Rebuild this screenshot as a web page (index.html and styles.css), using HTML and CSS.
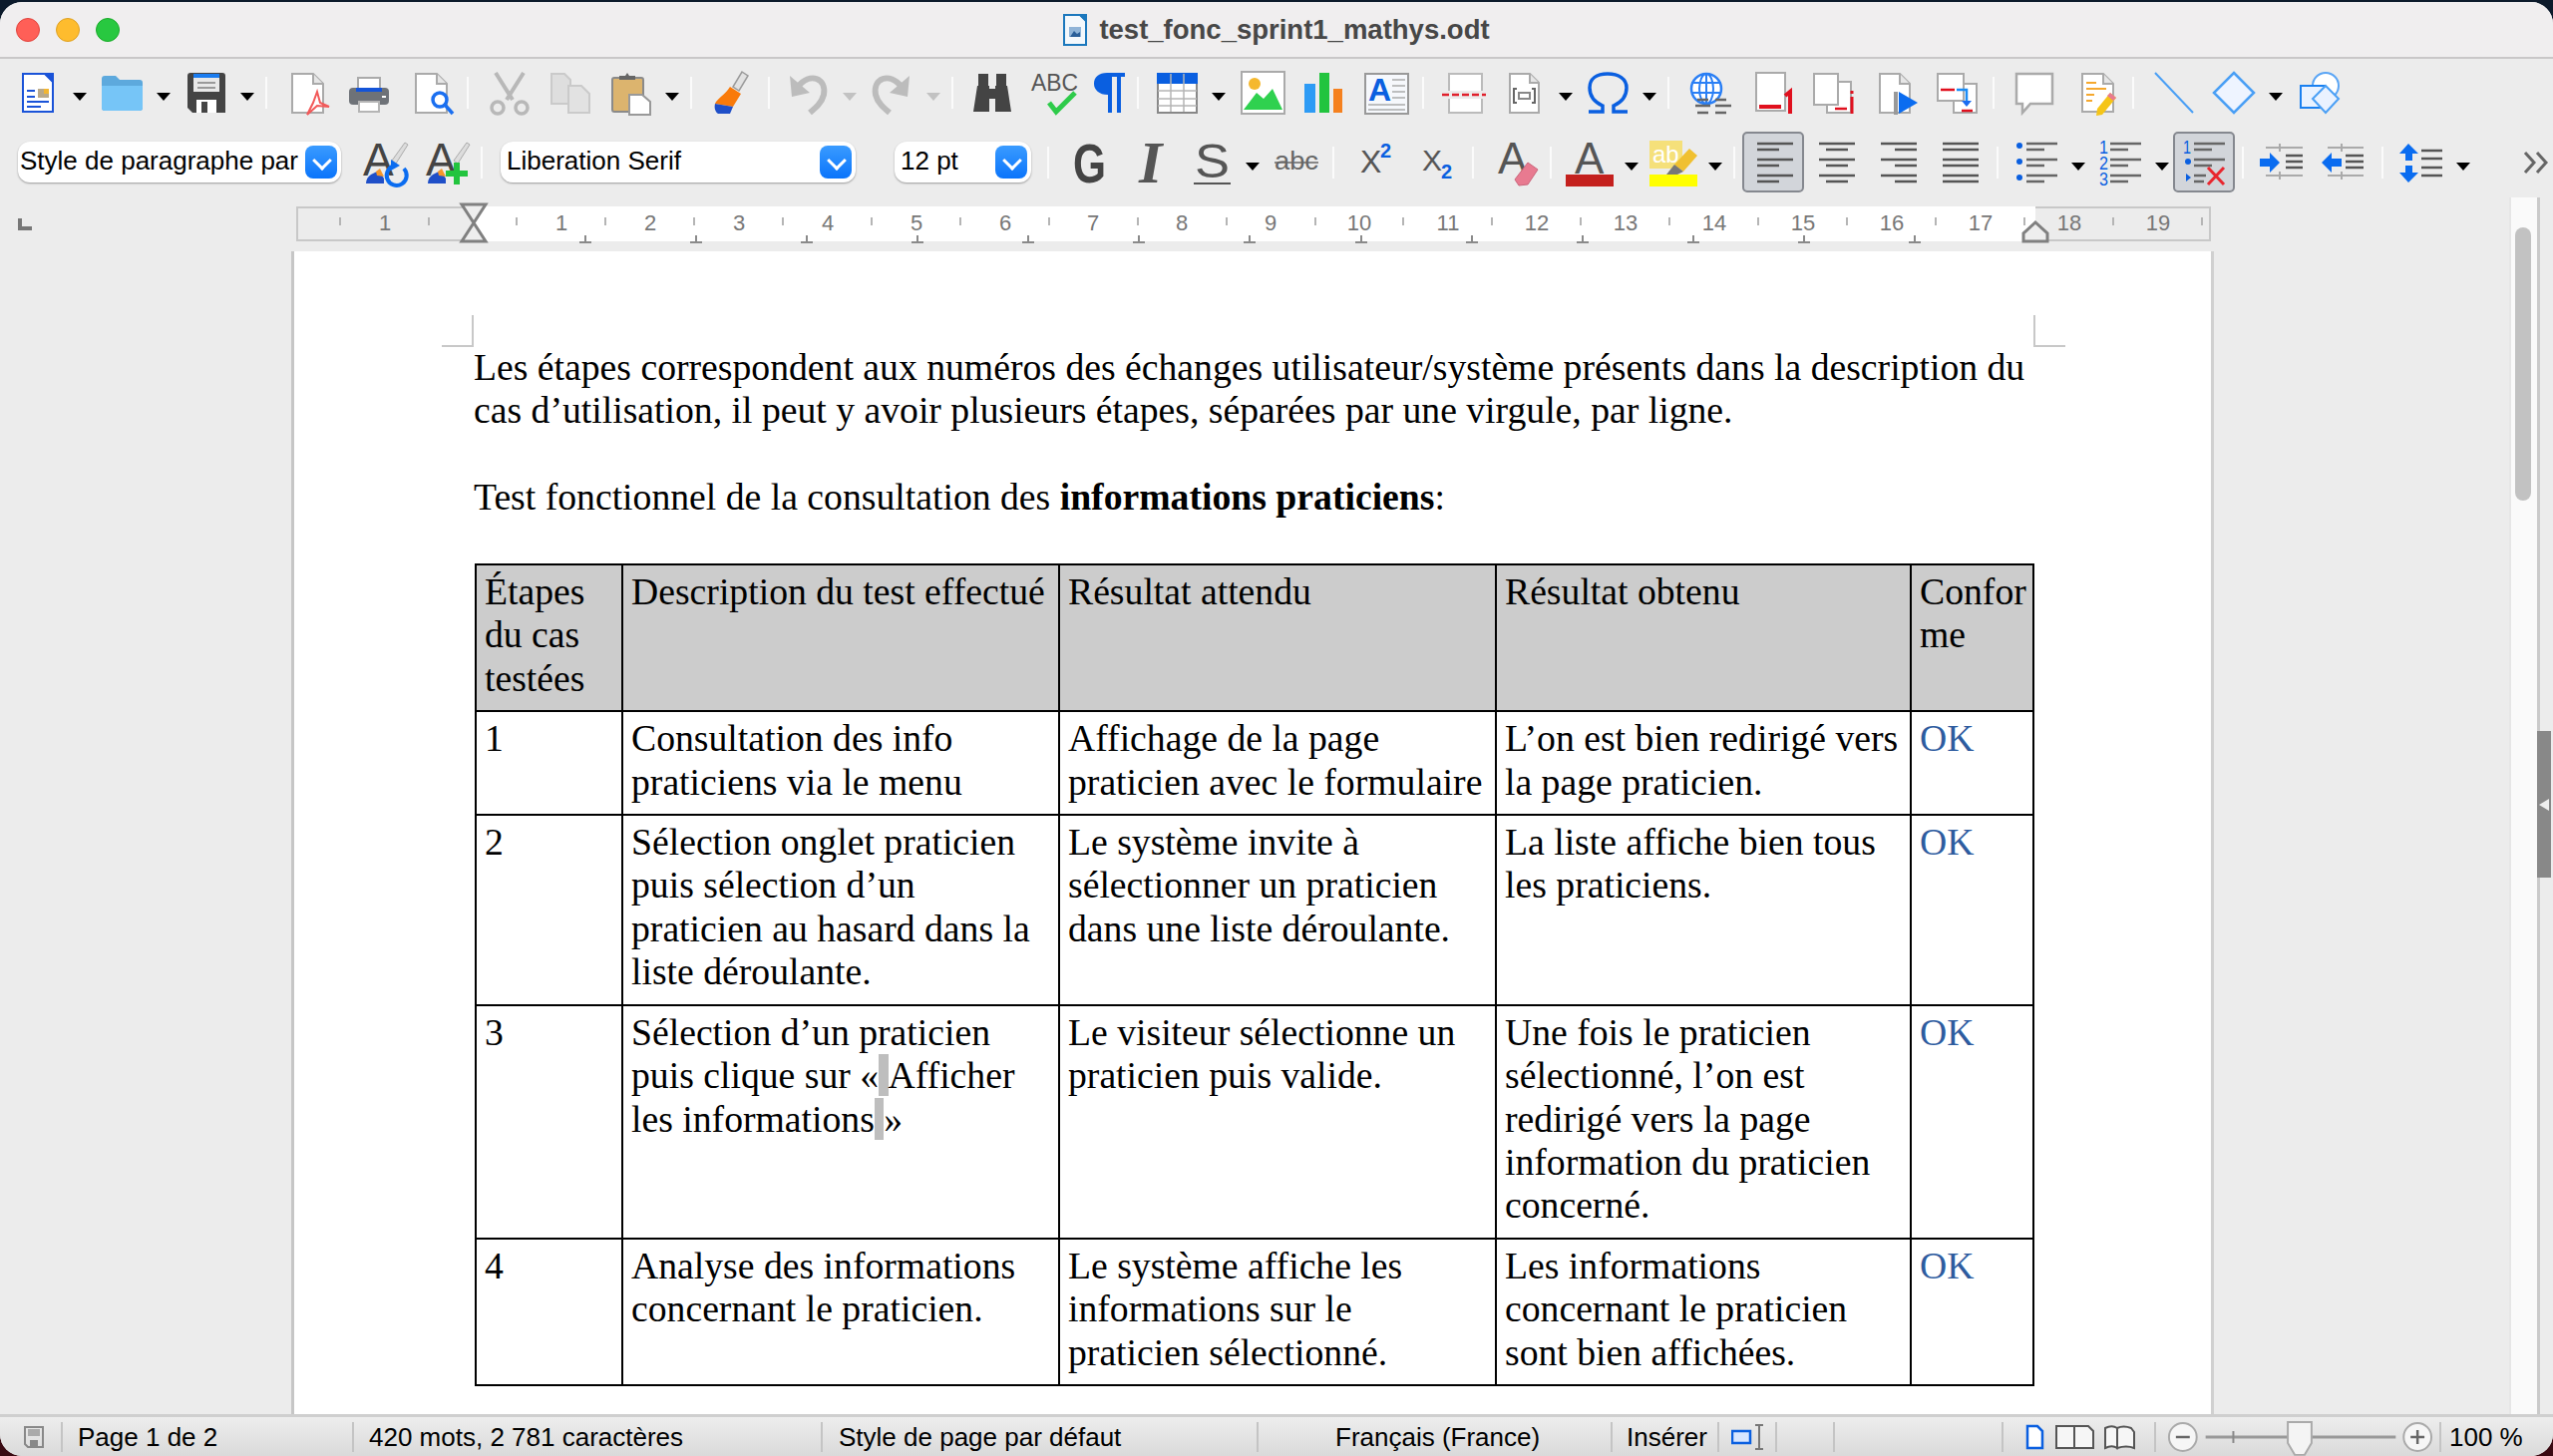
FILE: index.html
```html
<!DOCTYPE html>
<html lang="fr">
<head>
<meta charset="utf-8">
<title>test_fonc_sprint1_mathys.odt</title>
<link rel="stylesheet" href="styles.css">
</head>
<body>
<div class="window">
  <header class="titlebar">
    <div class="lights"><i class="light red"></i><i class="light yellow"></i><i class="light green"></i></div>
    <div class="title">
      <svg class="title-icon" viewBox="0 0 24 32"><path d="M1 1h16l6 6v24H1z" fill="#f4f8fc" stroke="#1c78bd" stroke-width="2"/><path d="M15 0h9v9z" fill="#1c78bd"/><rect x="6" y="13" width="12" height="10" fill="#8fb4d8"/><path d="M7 23l4-6 3 3 3-2v5z" fill="#2a5f99"/></svg>
      <span>test_fonc_sprint1_mathys.odt</span>
    </div>
  </header>

  <div class="toolbars">
    <div class="toolbar">
      <svg class="ic" viewBox="0 0 62 48"><path d="M16 5h22l8 8v30H16z" fill="#fff" stroke="#1a53d8" stroke-width="2"/><path d="M36 4h11v11z" fill="#1a53d8"/><path d="M20 22h8M20 28h8M20 33h22M20 38h14" stroke="#1a53d8" stroke-width="2"/><rect x="31" y="20" width="11" height="9" fill="#b9a98a"/><rect x="37" y="20" width="5" height="5" fill="#f2b632"/></svg>
      <span class="drop"></span>
      <svg class="ic" viewBox="0 0 62 48"><path d="M11 10a3 3 0 0 1 3-3h11l4 4h20a3 3 0 0 1 3 3v25a3 3 0 0 1-3 3H14a3 3 0 0 1-3-3z" fill="#5da9dd"/><path d="M11 17h41v22a3 3 0 0 1-3 3H14a3 3 0 0 1-3-3z" fill="#76c5f7"/></svg>
      <span class="drop"></span>
      <svg class="ic" viewBox="0 0 62 48"><path d="M13 7a3 3 0 0 1 3-3h32a3 3 0 0 1 3 3v37H18l-5-5z" fill="#444"/><rect x="19" y="5" width="26" height="18" fill="#e8e8e8"/><rect x="19" y="5" width="26" height="4" fill="#1a7cf0"/><path d="M23 14h18M23 19h18" stroke="#999" stroke-width="2"/><rect x="22" y="31" width="20" height="13" fill="#fff"/><rect x="27" y="33" width="6" height="11" fill="#444"/></svg>
      <span class="drop"></span>
      <span class="sep"></span>
      <svg class="ic" viewBox="0 0 62 48"><path d="M18 5h21l10 10v29H18z" fill="#fff" stroke="#aaa" stroke-width="2"/><path d="M39 5v10h10" fill="#e6e6e6" stroke="#aaa" stroke-width="2"/><path d="M43 23l3 11 9 4-12-1-10 9 6-12z" fill="none" stroke="#f25a5a" stroke-width="2"/></svg>
      <svg class="ic" viewBox="0 0 62 48"><rect x="22" y="9" width="22" height="14" fill="#fff" stroke="#aaa" stroke-width="2"/><rect x="13" y="19" width="40" height="17" rx="4" fill="#6e7278"/><rect x="20" y="19" width="26" height="4" fill="#1454d8"/><rect x="23" y="33" width="20" height="10" fill="#fff" stroke="#b5b5b5" stroke-width="2"/><rect x="46" y="27" width="4" height="2" fill="#fff"/></svg>
      <svg class="ic" viewBox="0 0 62 48"><path d="M18 5h21l10 10v29H18z" fill="#fff" stroke="#aaa" stroke-width="2"/><path d="M39 5v10h10" fill="#e6e6e6" stroke="#aaa" stroke-width="2"/><circle cx="42" cy="31" r="7" fill="#fff" stroke="#1a6ff0" stroke-width="3.5"/><path d="M47 36l8 9" stroke="#1a6ff0" stroke-width="3.5"/></svg>
      <span class="sep"></span>
      <svg class="ic" viewBox="0 0 62 48"><circle cx="22" cy="39" r="6" fill="none" stroke="#b8b8b8" stroke-width="3.5"/><circle cx="46" cy="39" r="6" fill="none" stroke="#b8b8b8" stroke-width="3.5"/><path d="M20 4l17 27M48 4L31 31" stroke="#b8b8b8" stroke-width="4"/></svg>
      <svg class="ic" viewBox="0 0 62 48"><path d="M14 5h13l6 6v24H14z" fill="#dedede" stroke="#cacaca" stroke-width="2"/><path d="M31 17h13l8 8v19H31z" fill="#e2e2e2" stroke="#cacaca" stroke-width="2"/></svg>
      <svg class="ic" viewBox="0 0 62 48"><rect x="13" y="9" width="31" height="34" rx="2" fill="#dcb46e" stroke="#8a8a8a" stroke-width="2"/><path d="M20 11V7h6l2-3 2 3h6v4z" fill="#666"/><path d="M30 26h13l8 7v13H30z" fill="#fff" stroke="#999" stroke-width="2"/></svg>
      <span class="drop"></span>
      <span class="sep"></span>
      <svg class="ic" viewBox="0 0 62 48"><path d="M43 3l6 4-9 15-6-4z" fill="#e2e2e2" stroke="#999" stroke-width="1.5"/><path d="M31 18l11 7-8 13-18-3c2-5 11-10 15-17z" fill="#f97a0a"/><path d="M16 35l18 3-3 7H19c-3-2-4-6-3-10z" fill="#1f4fc8"/></svg>
      <span class="sep"></span>
      <svg class="ic" viewBox="0 0 62 48"><path d="M21 18C33 3 50 9 47 26c-2 8-8 13-14 18" fill="none" stroke="#bcbcbc" stroke-width="6"/><path d="M13 7l2 21 18-4z" fill="#bcbcbc"/></svg>
      <span class="drop off"></span>
      <svg class="ic" viewBox="0 0 62 48"><path d="M41 18C29 3 12 9 15 26c2 8 8 13 14 18" fill="none" stroke="#bcbcbc" stroke-width="6"/><path d="M49 7l-2 21-18-4z" fill="#bcbcbc"/></svg>
      <span class="drop off"></span>
      <span class="sep"></span>
      <svg class="ic" viewBox="0 0 62 48"><path d="M18 5h10v12H18zM36 5h10v12H36z" fill="#444"/><path d="M13 43l4-26h12v26zM35 17h12l4 26H35zM29 20h6v10h-6z" fill="#444"/></svg>
      <svg class="ic" viewBox="0 0 62 48"><text class="ic-txt" x="9" y="22" font-size="23" fill="#555" textLength="47" lengthAdjust="spacingAndGlyphs">ABC</text><path d="M27 34l7 9 19-19" fill="none" stroke="#2ecb4a" stroke-width="5"/></svg>
      <svg class="ic-n" viewBox="0 0 46 48"><path d="M23 4h18v4h-4v36h-4V8h-5v36h-4V26c-9 0-14-5-14-11 0-7 5-11 13-11z" fill="#0a5fe0"/></svg>
      <span class="sep"></span>
      <svg class="ic" viewBox="0 0 62 48"><rect x="12" y="5" width="39" height="39" fill="#fff" stroke="#888" stroke-width="2"/><rect x="11" y="4" width="41" height="11" fill="#0a5fe0"/><path d="M25 5v38M38 5v38M12 22h39M12 30h39M12 37h39" stroke="#b5b5b5" stroke-width="1.5"/></svg>
      <span class="drop"></span>
      <svg class="ic" viewBox="0 0 62 48"><rect x="12" y="3" width="43" height="42" fill="#fff" stroke="#aaa" stroke-width="2"/><circle cx="25" cy="15" r="6" fill="#f5b82e"/><path d="M14 41l13-17 7 6 9-10 10 21z" fill="#2fd14f"/></svg>
      <svg class="ic" viewBox="0 0 62 48"><rect x="13" y="15" width="11" height="29" fill="#2d9bf5"/><rect x="28" y="4" width="10" height="40" fill="#22c43e"/><rect x="42" y="20" width="9" height="24" fill="#f5811f"/></svg>
      <svg class="ic" viewBox="0 0 62 48"><rect x="12" y="5" width="43" height="40" fill="#f6f8fc" stroke="#999" stroke-width="2"/><text class="ic-txt" x="15" y="32" font-size="32" font-weight="700" fill="#0a5fe0">A</text><path d="M39 11h13M39 17h13M39 23h13M39 29h13M15 36h37M15 41h37" stroke="#aaa" stroke-width="1.5"/></svg>
      <span class="sep"></span>
      <svg class="ic" viewBox="0 0 62 48"><path d="M18 22V5h33v17" fill="#fff" stroke="#bbb" stroke-width="2"/><path d="M18 30v14h33V30" fill="#fff" stroke="#bbb" stroke-width="2"/><path d="M11 26h44" stroke="#e0202c" stroke-width="2.5" stroke-dasharray="7 3"/></svg>
      <svg class="ic" viewBox="0 0 62 48"><path d="M17 5h20l9 9v30H17z" fill="#fff" stroke="#aaa" stroke-width="2"/><path d="M37 5v9h9" fill="#e6e6e6" stroke="#aaa" stroke-width="2"/><path d="M24 20h-3v14h3M39 20h3v14h-3" fill="none" stroke="#666" stroke-width="2"/><rect x="26" y="24" width="11" height="6" fill="none" stroke="#888" stroke-width="2"/></svg>
      <span class="drop"></span>
      <svg class="ic" viewBox="0 0 62 48"><path d="M12 43h14v-6C17 33 13 26 13 19 13 10 20 5 31 5s19 5 19 14c0 7-4 14-13 18v6h14" fill="none" stroke="#0a5fe0" stroke-width="3.5"/></svg>
      <span class="drop"></span>
      <span class="sep"></span>
      <svg class="ic" viewBox="0 0 62 48"><circle cx="30" cy="20" r="15" fill="#fff" stroke="#2a7ff5" stroke-width="2.5"/><ellipse cx="30" cy="20" rx="7" ry="15" fill="none" stroke="#2a7ff5" stroke-width="2"/><path d="M15 14h30M15 24h30M30 5v30" stroke="#2a7ff5" stroke-width="2"/><path d="M21 31h11M39 31h11M19 37h15M39 37h16M21 44h11M39 44h11" stroke="#666" stroke-width="2.5"/></svg>
      <svg class="ic" viewBox="0 0 62 48"><rect x="18" y="4" width="29" height="38" fill="#fff" stroke="#aaa" stroke-width="2"/><rect x="21" y="36" width="22" height="4" fill="#e0101e"/><path d="M47 27l5-4v22" fill="none" stroke="#e0101e" stroke-width="4"/></svg>
      <svg class="ic" viewBox="0 0 62 48"><rect x="27" y="13" width="24" height="31" fill="#fff" stroke="#aaa" stroke-width="2"/><rect x="14" y="5" width="24" height="31" fill="#fff" stroke="#aaa" stroke-width="2"/><path d="M35 40h12" stroke="#e0101e" stroke-width="2.5"/><path d="M52 22v3M52 28v17" stroke="#e0101e" stroke-width="3"/></svg>
      <svg class="ic" viewBox="0 0 62 48"><path d="M18 5h20l10 10v29H18z" fill="#fff" stroke="#aaa" stroke-width="2"/><path d="M38 5v10h10" fill="#e6e6e6" stroke="#aaa" stroke-width="2"/><path d="M34 23v23" stroke="#999" stroke-width="4"/><path d="M37 23l19 11-19 11z" fill="#0a6cf0"/></svg>
      <svg class="ic" viewBox="0 0 62 48"><rect x="30" y="15" width="23" height="29" fill="#fff" stroke="#aaa" stroke-width="2"/><rect x="14" y="5" width="26" height="27" fill="#fff" stroke="#aaa" stroke-width="2"/><path d="M17 21h14" stroke="#e0101e" stroke-width="2.5"/><path d="M33 21h10v12" fill="none" stroke="#1a8cf5" stroke-width="2.5"/><path d="M38 32h10l-5 6z" fill="#1a6cf0"/><path d="M38 42h11" stroke="#e0101e" stroke-width="2.5"/></svg>
      <span class="sep"></span>
      <svg class="ic" viewBox="0 0 62 48"><path d="M15 5h36v30H29l-8 9V35h-6z" fill="#fff" stroke="#aaa" stroke-width="2.5"/></svg>
      <svg class="ic" viewBox="0 0 62 48"><path d="M19 5h21l10 10v28H19z" fill="#fff" stroke="#aaa" stroke-width="2"/><path d="M40 5v10h10" fill="#e6e6e6" stroke="#aaa" stroke-width="2"/><path d="M23 14h10M23 20h20M23 26h8M23 32h6" stroke="#f5a82e" stroke-width="2"/><path d="M47 24l6 5-14 17-6 1 1-7z" fill="#f5c518"/><path d="M47 24l6 5-3 3-6-5z" fill="#e87a90"/></svg>
      <span class="sep"></span>
      <svg class="ic" viewBox="0 0 62 48"><path d="M14 4l38 40" stroke="#4a9ff5" stroke-width="2"/></svg>
      <svg class="ic" viewBox="0 0 62 48"><path d="M31 4l20 20-20 20-20-20z" fill="#eef4ff" stroke="#4a9ff5" stroke-width="2.5"/></svg>
      <span class="drop"></span>
      <svg class="ic" viewBox="0 0 62 48"><circle cx="39" cy="17" r="13" fill="#fff" stroke="#5aa5f5" stroke-width="2"/><rect x="14" y="17" width="24" height="22" fill="#eaf2ff" stroke="#1a80f0" stroke-width="2"/><path d="M39 17l13 13-13 14-13-14z" fill="#eaf2ff" stroke="#4a9ff5" stroke-width="2"/></svg>
    </div>

    <div class="toolbar toolbar-fmt">
      <div class="combo combo-style"><span class="combo-text">Style de paragraphe par</span><span class="combo-btn"></span></div>
      <svg class="ic ic-first" viewBox="0 0 62 48"><text class="ic-txt" x="8" y="37" font-size="46" fill="#444">A</text><path d="M50 4l3 2-12 19-4-3z" fill="#ddd" stroke="#aaa"/><path d="M16 36l8-4 5 8v5H11c0-4 2-7 5-9z" fill="#1f4fc8"/><path d="M21 33l4-3 4 8-7-1z" fill="#f5962a"/><path d="M49 30a10 10 0 1 1-9-3" fill="none" stroke="#0a6cf0" stroke-width="4"/><path d="M36 21l9 6-9 5z" fill="#0a6cf0"/></svg>
      <svg class="ic ic-second" viewBox="0 0 62 48"><text class="ic-txt" x="9" y="37" font-size="46" fill="#444">A</text><path d="M50 4l3 2-12 19-4-3z" fill="#ddd" stroke="#aaa"/><path d="M16 36l8-4 5 8v5H11c0-4 2-7 5-9z" fill="#1f4fc8"/><path d="M21 33l4-3 4 8-7-1z" fill="#f5962a"/><path d="M40 24v22M29 35h22" stroke="#22c43e" stroke-width="6"/></svg>
      <span class="sep"></span>
      <div class="combo combo-font"><span class="combo-text">Liberation Serif</span><span class="combo-btn"></span></div>
      <div class="combo combo-size"><span class="combo-text">12 pt</span><span class="combo-btn"></span></div>
      <span class="sep"></span>
      <svg class="ic" viewBox="0 0 62 48"><text class="ic-txt" x="17" y="44" font-size="55" font-weight="700" fill="#444" textLength="33" lengthAdjust="spacingAndGlyphs">G</text></svg>
      <svg class="ic" viewBox="0 0 62 48"><text class="ic-serif" x="21" y="44" font-size="60" font-style="italic" font-weight="700" fill="#555">I</text></svg>
      <svg class="ic" viewBox="0 0 62 48"><text class="ic-txt" x="15" y="39" font-size="48" fill="#555" textLength="35" lengthAdjust="spacingAndGlyphs">S</text><rect x="14" y="44" width="37" height="2" fill="#555"/></svg>
      <span class="drop"></span>
      <svg class="ic" viewBox="0 0 62 48"><text class="ic-txt" x="11" y="31" font-size="25" fill="#666" textLength="44" lengthAdjust="spacingAndGlyphs">abc</text><path d="M11 24h44" stroke="#666" stroke-width="1.5"/></svg>
      <span class="sep"></span>
      <svg class="ic" viewBox="0 0 62 48"><text class="ic-txt" x="19" y="34" font-size="32" fill="#555">X</text><text class="ic-txt" x="39" y="19" font-size="20" font-weight="700" fill="#0a5fe0">2</text></svg>
      <svg class="ic" viewBox="0 0 62 48"><text class="ic-txt" x="19" y="32" font-size="30" fill="#555">X</text><text class="ic-txt" x="38" y="40" font-size="20" font-weight="700" fill="#0a5fe0">2</text></svg>
      <span class="sep"></span>
      <svg class="ic" viewBox="0 0 62 48"><text class="ic-txt" x="17" y="35" font-size="44" fill="#555">A</text><path d="M47 24l10 7-10 15-9 1-4-6z" fill="#e87a90" stroke="#c9647a"/></svg>
      <span class="sep"></span>
      <svg class="ic" viewBox="0 0 62 48"><text class="ic-txt" x="16" y="35" font-size="44" fill="#555">A</text><rect x="7" y="36" width="48" height="12" fill="#c4201d"/></svg>
      <span class="drop"></span>
      <svg class="ic" viewBox="0 0 62 48"><rect x="7" y="2" width="33" height="28" fill="#f5e07a"/><text class="ic-txt" x="10" y="24" font-size="24" fill="#fff">ab</text><path d="M47 10l8 7-14 16-9-7z" fill="#f0c030"/><path d="M32 26l9 7-6 3H24z" fill="#777"/><rect x="7" y="36" width="48" height="12" fill="#ffff00"/></svg>
      <span class="drop"></span>
      <span class="sep"></span>
      <span class="toggle"><svg class="ic-t" viewBox="0 0 58 48"><path d="M13 5h36M13 21h36M13 37h36" stroke="#555" stroke-width="2.5"/><path d="M13 11h22M13 27h22M13 43h22" stroke="#555" stroke-width="2.5"/></svg></span>
      <svg class="ic" viewBox="0 0 62 48"><path d="M15 5h36M15 21h36M15 37h36M22 11h22M22 27h22M22 43h22" stroke="#555" stroke-width="2.5"/></svg>
      <svg class="ic" viewBox="0 0 62 48"><path d="M15 5h36M15 21h36M15 37h36M29 11h22M29 27h22M29 43h22" stroke="#555" stroke-width="2.5"/></svg>
      <svg class="ic" viewBox="0 0 62 48"><path d="M15 5h36M15 11h36M15 21h36M15 27h36M15 37h36M15 43h36" stroke="#555" stroke-width="2.5"/></svg>
      <span class="sep"></span>
      <svg class="ic" viewBox="0 0 62 48"><path d="M21 5h31M21 21h31M21 37h31M21 11h18M21 27h18M21 43h18" stroke="#666" stroke-width="2.5"/><circle cx="14" cy="7" r="3" fill="#0a5fe0"/><circle cx="14" cy="23" r="3" fill="#0a5fe0"/><circle cx="14" cy="39" r="3" fill="#0a5fe0"/></svg>
      <span class="drop"></span>
      <svg class="ic" viewBox="0 0 62 48"><text class="ic-txt" x="10" y="15" font-size="19" fill="#0a5fe0" textLength="9" lengthAdjust="spacingAndGlyphs">1</text><text class="ic-txt" x="10" y="31" font-size="19" fill="#0a5fe0" textLength="9" lengthAdjust="spacingAndGlyphs">2</text><text class="ic-txt" x="10" y="47" font-size="19" fill="#0a5fe0" textLength="9" lengthAdjust="spacingAndGlyphs">3</text><path d="M21 5h31M21 21h31M21 37h31M21 11h18M21 27h18M21 43h18" stroke="#666" stroke-width="2.5"/></svg>
      <span class="drop"></span>
      <span class="toggle"><svg class="ic-t" viewBox="0 0 58 48"><text class="ic-txt" x="8" y="15" font-size="19" fill="#0a5fe0" textLength="8" lengthAdjust="spacingAndGlyphs">1</text><circle cx="13" cy="23" r="3" fill="#0a5fe0"/><path d="M11 35l5 4-5 4z" fill="#0a5fe0"/><path d="M19 5h31M19 21h31M19 37h12M19 11h18M19 27h18M19 43h10" stroke="#666" stroke-width="2.5"/><path d="M33 29l16 17M49 29L33 46" stroke="#e8262e" stroke-width="3"/></svg></span>
      <span class="sep"></span>
      <svg class="ic" viewBox="0 0 62 48"><path d="M15 9h37M15 37h37M29 5v8M29 33v8" stroke="#aaa" stroke-width="2"/><path d="M35 17h17M35 23h17M35 29h17" stroke="#555" stroke-width="2.5"/><path d="M9 20h10v-6l10 10-10 10v-6H9z" fill="#0a6cf0"/></svg>
      <svg class="ic" viewBox="0 0 62 48"><path d="M15 9h36M15 37h36M29 5v8M29 33v8" stroke="#aaa" stroke-width="2"/><path d="M33 17h18M33 23h18M33 29h18" stroke="#555" stroke-width="2.5"/><path d="M29 20H19v-6L9 24l10 10v-6h10z" fill="#0a6cf0"/></svg>
      <span class="sep"></span>
      <svg class="ic" viewBox="0 0 62 48"><path d="M31 12h21M31 20h21M31 29h21M31 37h21" stroke="#555" stroke-width="2.5"/><path d="M18 5l10 10h-6v7h-7v-7H9zM18 44l10-10h-6v-7h-7v7H9z" fill="#0a6cf0"/></svg>
      <span class="drop"></span>
      <svg class="overflow" viewBox="0 0 26 22"><path d="M2 1l9 10-9 10M14 1l9 10-9 10" fill="none" stroke="#666" stroke-width="3"/></svg>
    </div>
  </div>

  <div class="content">
    <div class="editor">
      <div class="ruler-row">
        <svg class="tab-kind" viewBox="0 0 14 12"><path d="M0 0h4v8h10v4H0z" fill="#777"/></svg>
        <svg class="ruler" viewBox="297 204 1924 42">
          <rect x="475" y="207" width="1566" height="35" fill="#fff"/>
          <path d="M475 208H298v33H475M2041 208H2216v33H2041" fill="none" stroke="#c8c8c8" stroke-width="2"/>
          <path d="M341 218v8M430 218v8M518 218v8M607 218v8M696 218v8M785 218v8M874 218v8M963 218v8M1052 218v8M1141 218v8M1230 218v8M1319 218v8M1407 218v8M1496 218v8M1585 218v8M1674 218v8M1763 218v8M1852 218v8M1941 218v8M2030 218v8M2119 218v8M2208 218v8" stroke="#b5b5b5" stroke-width="2"/>
          <path d="M587 236v7M698 236v7M809 236v7M920 236v7M1031 236v7M1142 236v7M1253 236v7M1365 236v7M1476 236v7M1587 236v7M1698 236v7M1809 236v7M1920 236v7M581 243h12M692 243h12M803 243h12M914 243h12M1025 243h12M1136 243h12M1247 243h12M1359 243h12M1470 243h12M1581 243h12M1692 243h12M1803 243h12M1914 243h12" stroke="#8a8a8a" stroke-width="2"/>
          <g class="ruler-num">
            <text x="386" y="231">1</text><text x="563" y="231">1</text><text x="652" y="231">2</text><text x="741" y="231">3</text><text x="830" y="231">4</text><text x="919" y="231">5</text><text x="1008" y="231">6</text><text x="1096" y="231">7</text><text x="1185" y="231">8</text><text x="1274" y="231">9</text><text x="1363" y="231">10</text><text x="1452" y="231">11</text><text x="1541" y="231">12</text><text x="1630" y="231">13</text><text x="1719" y="231">14</text><text x="1808" y="231">15</text><text x="1897" y="231">16</text><text x="1986" y="231">17</text><text x="2075" y="231">18</text><text x="2164" y="231">19</text>
          </g>
          <path d="M463 205h24l-24 37h24z" fill="#eee" stroke="#808080" stroke-width="3"/>
          <path d="M2029 242v-8l12-11 12 11v8z" fill="#eee" stroke="#808080" stroke-width="3"/>
        </svg>
      </div>
      <div class="workspace">
        <div class="page">
          <i class="crop crop-l"></i><i class="crop crop-r"></i>
          <p>Les étapes correspondent aux numéros des échanges utilisateur/système présents dans la description du<br>cas d’utilisation, il peut y avoir plusieurs étapes, séparées par une virgule, par ligne.</p>
          <p class="blank">&nbsp;</p>
          <p>Test fonctionnel de la consultation des <b>informations praticiens</b>:</p>
          <p class="blank">&nbsp;</p>
          <table class="doc-table">
            <colgroup><col class="c1"><col class="c2"><col class="c3"><col class="c4"><col class="c5"></colgroup>
            <tr class="head"><td>Étapes<br>du cas<br>testées</td><td>Description du test effectué</td><td>Résultat attendu</td><td>Résultat obtenu</td><td>Confor<br>me</td></tr>
            <tr><td>1</td><td>Consultation des info<br>praticiens via le menu</td><td>Affichage de la page<br>praticien avec le formulaire</td><td>L’on est bien redirigé vers<br>la page praticien.</td><td class="ok">OK</td></tr>
            <tr><td>2</td><td>Sélection onglet praticien<br>puis sélection d’un<br>praticien au hasard dans la<br>liste déroulante.</td><td>Le système invite à<br>sélectionner un praticien<br>dans une liste déroulante.</td><td>La liste affiche bien tous<br>les praticiens.</td><td class="ok">OK</td></tr>
            <tr><td>3</td><td>Sélection d’un praticien<br>puis clique sur «<span class="nbsp">&nbsp;</span>Afficher<br>les informations<span class="nbsp">&nbsp;</span>»</td><td>Le visiteur sélectionne un<br>praticien puis valide.</td><td>Une fois le praticien<br>sélectionné, l’on est<br>redirigé vers la page<br>information du praticien<br>concerné.</td><td class="ok">OK</td></tr>
            <tr><td>4</td><td>Analyse des informations<br>concernant le praticien.</td><td>Le système affiche les<br>informations sur le<br>praticien sélectionné.</td><td>Les informations<br>concernant le praticien<br>sont bien affichées.</td><td class="ok">OK</td></tr>
          </table>
        </div>
      </div>
    </div>
    <div class="scrollbar"><div class="thumb"></div></div>
    <div class="deck"><div class="deck-handle"><svg viewBox="0 0 10 12"><path d="M10 0v12L0 6z" fill="#eee"/></svg></div></div>
  </div>

  <footer class="status">
    <div class="cell cell-save"><svg viewBox="0 0 20 22"><path d="M1 1h18v20H4l-3-3z" fill="none" stroke="#888" stroke-width="2"/><rect x="4" y="3" width="12" height="7" fill="#aaa"/><rect x="6" y="14" width="8" height="7" fill="#888"/></svg></div>
    <div class="cell cell-page">Page 1 de 2</div>
    <div class="cell cell-words">420 mots, 2 781 caractères</div>
    <div class="cell cell-style">Style de page par défaut</div>
    <div class="cell cell-lang">Français (France)</div>
    <div class="cell cell-ins">Insérer</div>
    <div class="cell cell-sel"><svg viewBox="0 0 36 26"><rect x="1" y="7" width="18" height="12" fill="#d8e6ff" stroke="#0a5fe0" stroke-width="2.5"/><path d="M24 1h8M24 25h8M28 1v24" stroke="#777" stroke-width="2"/></svg></div>
    <div class="cell cell-e1"></div>
    <div class="cell cell-e2"></div>
    <div class="cell cell-views"><svg viewBox="0 0 112 26"><path d="M2 2h10l5 5v17H2z" fill="#fff" stroke="#0a5fe0" stroke-width="2.5"/><path d="M31 2h18v22H31zM49 2h14l5 5v17H49zM80 4c4-2 9-2 12 0v20c-3-2-8-2-12 0zM92 4c4-2 9-2 14 0l3 4v16c-5-2-11-2-17 0z" fill="#f6f6f6" stroke="#555" stroke-width="2"/></svg></div>
    <div class="cell cell-zoom">
      <svg viewBox="0 0 286 40"><circle cx="27" cy="20" r="14" fill="#f6f6f6" stroke="#aaa" stroke-width="2"/><path d="M20 20h14" stroke="#666" stroke-width="2.5"/><path d="M50 20h192" stroke="#999" stroke-width="3"/><path d="M78 14v12" stroke="#888" stroke-width="2"/><path d="M133 5h24v21l-7 12h-10l-7-12z" fill="#f4f4f4" stroke="#aaa" stroke-width="2"/><circle cx="264" cy="20" r="14" fill="#f6f6f6" stroke="#aaa" stroke-width="2"/><path d="M257 20h14M264 13v14" stroke="#666" stroke-width="2.5"/></svg>
    </div>
    <div class="cell cell-pct">100 %</div>
  </footer>
</div>
</body>
</html>
```
FILE: styles.css
```css
* { box-sizing: border-box; }
html, body { margin: 0; padding: 0; height: 100%; }
body {
  width: 2560px;
  height: 1460px;
  overflow: hidden;
  background: linear-gradient(#0c1a2b 0, #0c1a2b 60%, #3a0a12 100%);
  font-family: "Liberation Sans", Arial, sans-serif;
  padding-top: 2px;
}
.window {
  width: 2560px;
  height: 1458px;
  display: flex;
  flex-direction: column;
  background: #ececec;
  border-radius: 22px 22px 22px 22px;
  overflow: hidden;
}

/* Title bar */
.titlebar {
  flex: none;
  height: 57px;
  background: #f0eeef;
  border-bottom: 2px solid #c9c7c8;
  display: flex;
  align-items: center;
  position: relative;
}
.lights { display: flex; gap: 16px; padding-left: 16px; }
.light { display: block; width: 24px; height: 24px; border-radius: 50%; }
.red { background: #ff5f57; border: 1px solid #e0443e; }
.yellow { background: #febc2e; border: 1px solid #dea123; }
.green { background: #28c840; border: 1px solid #1aab29; }
.title {
  position: absolute;
  left: 0; right: 0; top: 0; bottom: 0;
  display: flex;
  align-items: center;
  justify-content: center;
  gap: 12px;
  font-size: 27.5px;
  font-weight: 700;
  color: #474747;
}
.title-icon { width: 24px; height: 32px; }

/* Toolbars */
.toolbars { flex: none; height: 139px; padding-top: 3px; }
.toolbar {
  display: flex;
  align-items: center;
  height: 61px;
  padding-left: 7px;
}
.toolbar-fmt { margin-top: 9px; padding-left: 18px; }
.ic { flex: none; width: 62px; height: 48px; display: block; overflow: visible; }
.ic-n { flex: none; width: 46px; height: 48px; display: block; overflow: visible; }
.ic-first { margin-left: 14px; }
.ic-second { margin-right: -5px; }
.ic-t { display: block; width: 58px; height: 48px; overflow: visible; }
.ic-txt { font-family: "Liberation Sans", Arial, sans-serif; }
.ic-serif { font-family: "Liberation Serif", "Times New Roman", serif; }
.drop {
  flex: none;
  width: 22px;
  height: 48px;
  display: flex;
  align-items: center;
  justify-content: center;
  padding-top: 8px;
}
.drop::before {
  content: "";
  border-left: 7px solid transparent;
  border-right: 7px solid transparent;
  border-top: 8px solid #000;
}
.drop.off::before { border-top-color: #c2c2c2; }
.sep {
  flex: none;
  width: 16px;
  height: 32px;
  position: relative;
}
.sep::before {
  content: "";
  display: block;
  width: 2px;
  height: 32px;
  margin: 0 auto;
  background: #fbfbfb;
}
.toggle {
  flex: none;
  width: 62px;
  height: 61px;
  padding: 5px 0;
  background: #d2d5da;
  border: 2px solid #85888f;
  border-radius: 5px;
  display: flex;
  align-items: center;
  justify-content: center;
}
.overflow { width: 26px; height: 22px; margin-left: auto; margin-right: 4px; }

/* Combos */
.combo {
  flex: none;
  height: 41px;
  margin-bottom: 1px;
  display: flex;
  align-items: center;
  justify-content: space-between;
  background: #fff;
  border-radius: 12px;
  box-shadow: 0 1px 2px rgba(0,0,0,.35);
  padding: 0 4px 0 6px;
  font-size: 26px;
  color: #000;
  white-space: nowrap;
}
.combo-text { padding-bottom: 1px; }
.combo-style { width: 324px; padding-left: 2px; }
.combo-font { width: 356px; margin-left: 11px; }
.combo-size { width: 137px; margin-left: 39px; margin-right: 9px; }
.combo-btn {
  flex: none;
  width: 32px;
  height: 33px;
  border-radius: 8px;
  background: linear-gradient(#3a9bff, #0a74fb);
  position: relative;
}
.combo-btn::after {
  content: "";
  position: absolute;
  left: 10px;
  top: 8px;
  width: 11px;
  height: 11px;
  border-right: 3px solid #fff;
  border-bottom: 3px solid #fff;
  transform: rotate(45deg);
}

/* Content */
.content { flex: 1; min-height: 0; display: flex; }
.editor { flex: none; width: 2516px; display: flex; flex-direction: column; min-height: 0; }
.ruler-row { flex: none; height: 47px; display: flex; padding-top: 6px; position: relative; }
.tab-kind { width: 14px; height: 12px; margin: 15px 0 0 18px; }
.ruler { width: 1924px; height: 42px; margin-left: 265px; display: block; overflow: visible; }
.ruler-num { font-family: "Liberation Sans", Arial, sans-serif; font-size: 22px; fill: #777; text-anchor: middle; }
.workspace { flex: 1; min-height: 0; overflow: hidden; padding: 7px 0 0 292px; }
.page {
  position: relative;
  width: 1928px;
  height: 1300px;
  background: #fff;
  border-left: 3px solid #c6c6c6;
  border-right: 3px solid #d0d0d0;
  padding: 95px 0 0 180px;
  font-family: "Liberation Serif", "Times New Roman", serif;
  font-size: 37.7px;
  line-height: 43.4px;
  color: #000;
}
.page p { margin: 0; white-space: nowrap; }
.crop { position: absolute; width: 32px; height: 32px; top: 64px; border: 0 solid #c8c8c8; }
.crop-l { left: 148px; border-right-width: 2px; border-bottom-width: 2px; }
.crop-r { left: 1744px; border-left-width: 2px; border-bottom-width: 2px; }

.doc-table { border-collapse: collapse; table-layout: fixed; width: 1562px; margin: 1px 0 0 1px; }
.c1 { width: 147px; }
.c2 { width: 438px; }
.c3 { width: 438px; }
.c4 { width: 416px; }
.c5 { width: 123px; }
.doc-table td {
  border: 2px solid #000;
  padding: 5px 0 10px 8px;
  vertical-align: top;
  white-space: nowrap;
}
.head td { background: #cccccc; }
.doc-table .ok { color: #2e5c9f; }
.nbsp { background: #bebebe; }

/* Scrollbar and sidebar deck */
.scrollbar { flex: none; width: 28px; background: #fafafa; border-left: 2px solid #e6e6e6; padding: 30px 5px 0 4px; }
.thumb { width: 16px; height: 274px; border-radius: 8px; background: #c2c2c2; }
.deck { flex: 1; position: relative; border-left: 3px solid #cacaca; }
.deck-handle {
  position: absolute;
  left: -3px;
  top: 535px;
  width: 14px;
  height: 147px;
  background: #888;
  display: flex;
  align-items: center;
  justify-content: center;
}
.deck-handle svg { width: 10px; height: 12px; }

/* Status bar */
.status {
  flex: none;
  height: 42px;
  display: flex;
  align-items: center;
  border-top: 3px solid #cfcfcf;
  background: linear-gradient(#ededed, #dadada);
  font-size: 26px;
  color: #000;
  white-space: nowrap;
}
.cell {
  flex: none;
  height: 30px;
  line-height: 30px;
  border-left: 2px solid #c4c4c4;
  display: flex;
  align-items: center;
}
.cell-save { width: 61px; border-left: 0; padding-left: 24px; }
.cell-save svg { width: 20px; height: 22px; }
.cell-page { width: 292px; padding-left: 15px; }
.cell-words { width: 470px; padding-left: 15px; }
.cell-style { width: 437px; padding-left: 16px; }
.cell-lang { width: 355px; padding-left: 77px; }
.cell-ins { width: 107px; padding-left: 14px; }
.cell-sel { width: 58px; padding-left: 12px; }
.cell-sel svg { width: 36px; height: 26px; }
.cell-e1 { width: 58px; }
.cell-e2 { width: 169px; }
.cell-views { width: 153px; padding-left: 22px; }
.cell-views svg { width: 112px; height: 26px; }
.cell-zoom { width: 286px; }
.cell-zoom svg { width: 286px; height: 40px; }
.cell-pct { width: 114px; padding-left: 8px; }
```
